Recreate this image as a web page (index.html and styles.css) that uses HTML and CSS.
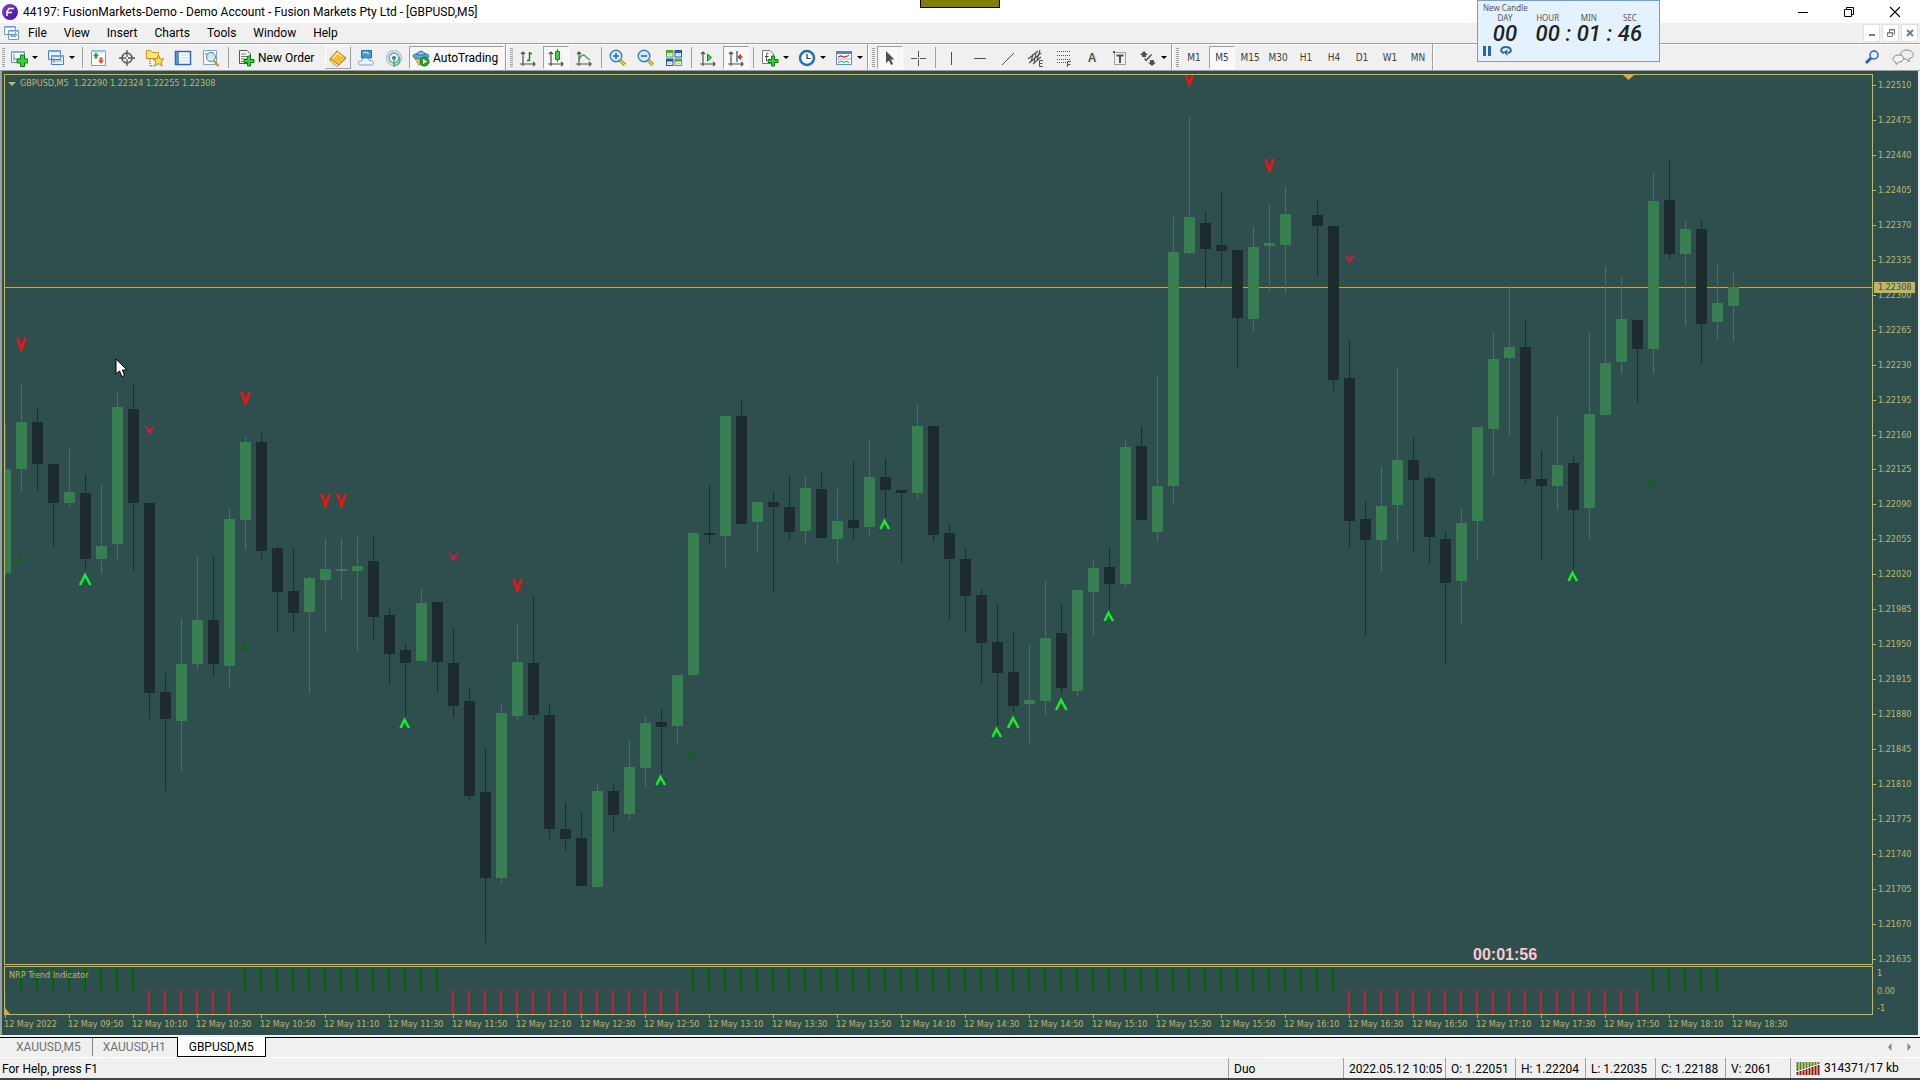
FILE: index.html
```html
<!DOCTYPE html>
<html lang="en">
<head>
    <meta charset="UTF-8">
    <title>44197: FusionMarkets-Demo</title>
    <link rel="stylesheet" href="styles.css">
</head>
<body>
<header class="titlebar">
    <svg class="app-icon" width="16" height="16" viewBox="0 0 16 16"><defs><linearGradient id="app" x1="0" y1="0" x2="1" y2="1"><stop offset="0" stop-color="#8a3fe0"/><stop offset="1" stop-color="#3c1390"/></linearGradient></defs><circle cx="8" cy="8" r="8" fill="url(#app)"/><path d="M5 12V7.500L7 4.500H12M5.500 8.500H10" fill="none" stroke="#fff" stroke-width="1.500"/></svg>
    <h1>44197: FusionMarkets-Demo - Demo Account - Fusion Markets Pty Ltd - [GBPUSD,M5]</h1>
    <div class="window-buttons">
        <button aria-label="Minimize"><svg width="12" height="12" viewBox="0 0 12 12"><path d="M1 6.500H11" stroke="#000"/></svg></button>
        <button aria-label="Restore"><svg width="12" height="12" viewBox="0 0 12 12"><path d="M1.500 3.500H8.500V10.500H1.500ZM3.500 3V1.500H10.500V8.500H9" fill="none" stroke="#000"/></svg></button>
        <button aria-label="Close"><svg width="12" height="12" viewBox="0 0 12 12"><path d="M1 1L11 11M11 1L1 11" stroke="#000" stroke-width="1.100"/></svg></button>
    </div>
</header>

<nav class="menubar">
    <svg class="menu-icon" width="16" height="16" viewBox="0 0 16 16"><path d="M.5 1.500H11.500V9.500H.5ZM4.500 5.500H14.500V14.500H4.500Z" fill="#fff" stroke="#6f9bd0"/><path d="M1 2.500H11M5 6.500H14" stroke="#9fc3ea"/><path d="M6 9L8 12L9.500 9L11 12L13 9" fill="none" stroke="#4c7cb8"/></svg>
    <button>File</button>
    <button>View</button>
    <button>Insert</button>
    <button>Charts</button>
    <button>Tools</button>
    <button>Window</button>
    <button>Help</button>
    <div class="mdi-buttons">
        <button aria-label="Minimize chart"><svg width="8" height="8" viewBox="0 0 8 8"><path d="M1 6H7" stroke="#6f7f8f" stroke-width="2"/></svg></button>
        <button aria-label="Restore chart"><svg width="8" height="8" viewBox="0 0 8 8"><path d="M.5 3.500H5.500V7.500H.5ZM2.500 3V.5H7.500V5H6" fill="none" stroke="#6f7f8f"/><path d="M0 4H6M2 1H8" stroke="#6f7f8f"/></svg></button>
        <button aria-label="Close chart"><svg width="8" height="8" viewBox="0 0 8 8"><path d="M1 1L7 7M7 1L1 7" stroke="#6f7f8f" stroke-width="2"/></svg></button>
    </div>
</nav>

<div class="toolbar">
    <div class="group first">
        <button class="tool drop" aria-label="New chart"><svg width="18" height="18" viewBox="0 0 18 18"><path d="M1.500 2.500H14.500V13.500H1.500Z" fill="#fff" stroke="#5d8fc4"/><path d="M1 3H15" stroke="#7fb0e0" stroke-width="2"/><path d="M4 5V12M3 10H13" stroke="#8895a5"/><path d="M10.500 6H14.500V10H18V14H14.500V17.500H10.500V14H7V10H10.500Z" fill="#35d435" stroke="#0a7a12"/></svg></button>
        <button class="tool drop" aria-label="Profiles"><svg width="18" height="18" viewBox="0 0 18 18"><path d="M1.500 1.500H13.500V10.500H1.500ZM4.500 6.500H16.500V15.500H4.500Z" fill="#eaf3fc" stroke="#4a80bd"/><path d="M1 2H14M4 7H17" stroke="#6ea5dc" stroke-width="2"/><path d="M4 12H15M7 9V14" stroke="#6f9bd0"/></svg></button>
        <i class="sep"></i>
        <button class="tool" aria-label="Market Watch"><svg width="18" height="18" viewBox="0 0 18 18"><path d="M1.500 1.500H15.500V16.500H1.500Z" fill="#fff" stroke="#6fa0d6"/><path d="M1 2.500H16" stroke="#a9cdf0" stroke-width="2"/><path d="M6 3.500L9 7H7.500V9.500H4.500V7H3Z" fill="#24a62c"/><path d="M11 15L14 11.500H12.500V8.500H9.500V11.500H8Z" fill="#ea5820"/></svg></button>
        <button class="tool" aria-label="Data Window"><svg width="18" height="18" viewBox="0 0 18 18"><circle cx="9" cy="9" r="5" fill="none" stroke="#555" stroke-width="1.500"/><path d="M9 1V8M9 10V17M1 9H8M10 9H17" stroke="#555" stroke-width="1.300"/></svg></button>
        <button class="tool" aria-label="Navigator"><svg width="20" height="18" viewBox="0 0 20 18"><path d="M1.500 10V1.500H6L7.500 3.500H13.500V9.500H1.500Z" fill="#ffe27a" stroke="#c99a2a"/><path d="M5 10V17H9" stroke="#555" fill="none" stroke-dasharray="1 1"/><path d="M13.500 6L15.200 10H19L16 12.700L17.200 17L13.500 14.600L9.800 17L11 12.700L8 10H11.800Z" fill="#ffdc55" stroke="#b98918"/></svg></button>
        <button class="tool" aria-label="Terminal"><svg width="18" height="18" viewBox="0 0 18 18"><path d="M1.500 2.500H16.500V15.500H1.500Z" fill="#fff" stroke="#2f69ad" stroke-width="1.500"/><path d="M2 3H5V15H2Z" fill="#5b92d3"/><path d="M7 6H15M7 9H15M7 12H15" stroke="#bdd4ec"/></svg></button>
        <button class="tool" aria-label="Strategy Tester"><svg width="18" height="18" viewBox="0 0 18 18"><path d="M1.500 1.500H14.500V15.500H1.500Z" fill="#fff" stroke="#7da5cc"/><path d="M3 5H6V9M10 3V9" stroke="#607890" fill="none"/><circle cx="9" cy="8" r="4.500" fill="#cde7f7cc" stroke="#4f83ae"/><path d="M12 12L16.500 17" stroke="#c9962d" stroke-width="2.500"/></svg></button>
        <i class="sep"></i>
        <button class="tool wide"><svg width="17" height="18" viewBox="0 0 17 18"><path d="M1.500 1.500H9L12.500 5V14.500H1.500Z" fill="#fff" stroke="#555"/><path d="M3 5H8M3 7.500H10M3 10H10M3 12.500H7" stroke="#777"/><path d="M9.500 7H12.500V10.500H16V13.500H12.500V17H9.500V13.500H6V10.500H9.500Z" fill="#35d435" stroke="#0a7a12"/></svg>New Order</button>
        <button class="tool raised" aria-label="MetaEditor"><svg width="18" height="18" viewBox="0 0 18 18"><path d="M1 10L8 2L17 9L10 16Z" fill="#f2bd3e" stroke="#b27a13"/><path d="M1 10V12L8 17.500L10 16Z" fill="#fff3bf" stroke="#a87318" stroke-width=".7"/><path d="M4 9L8.500 4L13 7.500" fill="none" stroke="#ffe99b" stroke-width="1.500"/></svg></button>
        <button class="tool" aria-label="Cloud"><svg width="18" height="18" viewBox="0 0 18 18"><path d="M4.500 1.500H14.500V9H4.500Z" fill="#3d9bdc" stroke="#1f70b5"/><path d="M6 4L9 3L12 5" stroke="#fff" fill="none"/><path d="M4 16C0 16 1 11 4.500 12C6 8 11 8 12 11.500C17 10.500 18 16 14 16Z" fill="#edf3fb" stroke="#7a9cc8"/></svg></button>
        <button class="tool" aria-label="Signals"><svg width="18" height="18" viewBox="0 0 18 18"><circle cx="9" cy="9" r="7.500" fill="none" stroke="#b1cbd9" stroke-width="1.400"/><circle cx="9" cy="9" r="5" fill="none" stroke="#6d9fb5" stroke-width="1.400"/><circle cx="9" cy="9" r="2" fill="#347aa0"/><path d="M9 9V17C14 16 16 12 14 8" stroke="#58b46c" stroke-width="1.600" fill="none"/></svg></button>
        <button class="tool wide pressed"><svg width="18" height="18" viewBox="0 0 18 18"><path d="M2 8H16L12 16H7Z" fill="#f4cf4b" stroke="#b98c1f"/><ellipse cx="9" cy="7" rx="8" ry="3" fill="#5aa9db" stroke="#2e78ae"/><path d="M5 6C5 1 13 1 13 6Z" fill="#7cc4ee" stroke="#2e78ae"/><circle cx="12.500" cy="12.500" r="4.500" fill="#21a72b" stroke="#11761b"/><path d="M11 10L15 12.500L11 15Z" fill="#fff"/></svg>AutoTrading</button>
    </div>
    <div class="group">
        <button class="tool" aria-label="Bar chart"><svg width="18" height="18" viewBox="0 0 18 18"><path d="M4 3V17M1 15H16M2 5L4 3L6 5M14 13L16 15L14 17" class="axes"/><path d="M10.500 3V12M8 11.500H10.500M10.500 4.500H13" stroke="#138a1d" stroke-width="1.500"/></svg></button>
        <button class="tool pressed" aria-label="Candlesticks"><svg width="18" height="18" viewBox="0 0 18 18"><path d="M4 3V17M1 15H16M2 5L4 3L6 5M14 13L16 15L14 17" class="axes"/><path d="M10.500 0V13" stroke="#138a1d"/><path d="M8.500 2.500H12.500V10.500H8.500Z" fill="#3bd43f" stroke="#138a1d"/></svg></button>
        <button class="tool" aria-label="Line chart"><svg width="18" height="18" viewBox="0 0 18 18"><path d="M4 3V17M1 15H16M2 5L4 3L6 5M14 13L16 15L14 17" class="axes"/><path d="M4 11C6 5 9 5 11 8L15 11" stroke="#3aa044" stroke-width="1.300" fill="none"/></svg></button>
        <i class="sep"></i>
        <button class="tool" aria-label="Zoom in"><svg width="18" height="18" viewBox="0 0 18 18"><path d="M11 11L16 16" stroke="#c79b20" stroke-width="3.500"/><path d="M11 11L16 16" stroke="#ffe680" stroke-width="1"/><circle cx="7" cy="7" r="5.800" fill="#d3ebfb" stroke="#3d7fb8" stroke-width="1.400"/><path d="M4 7H10M7 4V10" stroke="#2b6ca8" stroke-width="1.600"/></svg></button>
        <button class="tool" aria-label="Zoom out"><svg width="18" height="18" viewBox="0 0 18 18"><path d="M11 11L16 16" stroke="#c79b20" stroke-width="3.500"/><path d="M11 11L16 16" stroke="#ffe680" stroke-width="1"/><circle cx="7" cy="7" r="5.800" fill="#d3ebfb" stroke="#3d7fb8" stroke-width="1.400"/><path d="M4 7H10" stroke="#2b6ca8" stroke-width="1.600"/></svg></button>
        <button class="tool" aria-label="Tile windows"><svg width="18" height="18" viewBox="0 0 18 18"><path d="M1 1H8.500V8.500H1ZM9.500 9.500H17V17H9.500Z" fill="#56a832"/><path d="M9.500 1H17V8.500H9.500ZM1 9.500H8.500V17H1Z" fill="#2356b4"/><path d="M2 4H7.500V7.500H2ZM10.500 4H16V7.500H10.500ZM2 12.500H7.500V16H2ZM10.500 12.500H16V16H10.500Z" fill="#e4eefa"/><path d="M3 5.500H6M12 5.500H15M3 14.500H6M12 14.500H15" stroke="#9db"/></svg></button>
        <i class="sep"></i>
        <button class="tool" aria-label="Auto scroll"><svg width="18" height="18" viewBox="0 0 18 18"><path d="M4 3V17M1 15H16M2 5L4 3L6 5M14 13L16 15L14 17" class="axes"/><path d="M8.500 5L12.500 8.500L8.500 12Z" fill="#3bd43f" stroke="#138a1d"/></svg></button>
        <button class="tool pressed" aria-label="Chart shift"><svg width="18" height="18" viewBox="0 0 18 18"><path d="M4 3V17M1 15H16M2 5L4 3L6 5M14 13L16 15L14 17" class="axes"/><path d="M10 2V13" stroke="#2b6ca8" stroke-width="1.400"/><path d="M15.500 8H12M14 5.500L11.500 8L14 10.500" stroke="#b53a12" stroke-width="1.500" fill="none"/></svg></button>
        <i class="sep"></i>
        <button class="tool drop" aria-label="Indicators"><svg width="18" height="18" viewBox="0 0 18 18"><path d="M1.500 1.500H9L12.500 5V14.500H1.500Z" fill="#fff" stroke="#777"/><path d="M7.500 4C5.500 3.500 5.500 5 5.500 12M4 7.500H7.500" stroke="#444" fill="none"/><path d="M10.500 7H13.500V10.500H17V13.500H13.500V17H10.500V13.500H7V10.500H10.500Z" fill="#35d435" stroke="#0a7a12"/></svg></button>
        <button class="tool drop" aria-label="Periods"><svg width="18" height="18" viewBox="0 0 18 18"><circle cx="9" cy="9" r="7" fill="#f4f9ff" stroke="#2270bb" stroke-width="2.500"/><path d="M9 5V9.500H12.500" stroke="#333" fill="none" stroke-width="1.200"/></svg></button>
        <button class="tool drop" aria-label="Templates"><svg width="18" height="18" viewBox="0 0 18 18"><path d="M1.500 2.500H16.500V15.500H1.500Z" fill="#fff" stroke="#5d8fc4"/><path d="M1 3.500H17" stroke="#4c86c4" stroke-width="3"/><path d="M3 8L6 7L9 8L14 6.500" stroke="#a33" fill="none" stroke-width="1.200"/><path d="M2 10H16" stroke="#89b0d8"/><path d="M3 13.500L6 12L9 13.500L11 12L14 13.500" stroke="#2a9a34" fill="none"/></svg></button>
    </div>
    <div class="group">
        <button class="tool pressed" aria-label="Cursor"><svg width="18" height="18" viewBox="0 0 18 18"><path d="M5 2V14L8 11.500L10 16L12 15L10 10.500H13.500Z" fill="#505050"/></svg></button>
        <button class="tool" aria-label="Crosshair"><svg width="18" height="18" viewBox="0 0 18 18"><path d="M9.500 2V8M9.500 11V17M2 9.500H8M11 9.500H17M9 9.500H10" stroke="#505050"/></svg></button>
        <i class="sep"></i>
        <button class="tool" aria-label="Vertical line"><svg width="18" height="18" viewBox="0 0 18 18"><path d="M8.500 3V16" stroke="#505050"/></svg></button>
        <button class="tool" aria-label="Horizontal line"><svg width="18" height="18" viewBox="0 0 18 18"><path d="M3 9.500H15" stroke="#505050"/></svg></button>
        <button class="tool" aria-label="Trendline"><svg width="18" height="18" viewBox="0 0 18 18"><path d="M3 16L15 4" stroke="#505050"/></svg></button>
        <button class="tool" aria-label="Equidistant channel"><svg width="18" height="18" viewBox="0 0 18 18"><path d="M1 10L11 2M2 14L14 4M6 15L14 8M6 5L4 13M9 4L7 13M13 1L10 11" stroke="#505050" stroke-width="1.100"/><path d="M16 11.500H12.500V17.500H16M12.500 14.500H15.500" stroke="#505050" fill="none"/></svg></button>
        <button class="tool" aria-label="Fibonacci retracement"><svg width="18" height="18" viewBox="0 0 18 18"><path d="M2 2.500H16M2 6.500H16M2 10.500H16M2 13.500H11" stroke="#505050" stroke-dasharray="1 1"/><path d="M16 12.500H12.500V18M12.500 15.500H15.500" stroke="#505050" fill="none"/></svg></button>
        <button class="tool letter" aria-label="Text">A</button>
        <button class="tool" aria-label="Text label"><svg width="18" height="18" viewBox="0 0 18 18"><path d="M3.500 3.500H14.500V15.500H3.500Z" fill="none" stroke="#505050" stroke-dasharray="1 1"/><path d="M2 2H4V4H2Z" fill="#505050"/><path d="M5.500 6.500H12.500M9 6V14" stroke="#505050" stroke-width="2"/></svg></button>
        <button class="tool drop" aria-label="Arrows"><svg width="18" height="18" viewBox="0 0 18 18"><path d="M5 2L9 6H7V8H3V6H1ZM13 17L17 13.500L15 13.500V11H11V13.500H9Z" fill="#505050"/><path d="M5.500 9.500L8 12M8 10.500L12.500 5.500" stroke="#505050" stroke-width="1.500"/></svg></button>
    </div>
    <div class="group frames">
        <button class="tool">M1</button>
        <button class="tool pressed">M5</button>
        <button class="tool">M15</button>
        <button class="tool">M30</button>
        <button class="tool">H1</button>
        <button class="tool">H4</button>
        <button class="tool">D1</button>
        <button class="tool">W1</button>
        <button class="tool">MN</button>
    </div>
    <div class="group-end"></div>
    <div class="toolbar-right">
        <button aria-label="Search"><svg width="16" height="16" viewBox="0 0 16 16"><path d="M2 14L7 9" stroke="#2d5fb4" stroke-width="3"/><circle cx="10" cy="6" r="4" fill="#e8f2ff" stroke="#2d5fb4" stroke-width="1.500"/></svg></button>
        <button aria-label="Chat"><svg width="22" height="16" viewBox="0 0 22 16"><path d="M14 1C23 1 23 9 17 9.500L17 13L14 10C7 10 7 1 14 1Z" fill="#eee" stroke="#888"/><path d="M7 6C-1 6 0 13 4 13L4 15.500L7 13C13 13 13 6 7 6Z" fill="#f8f8f8" stroke="#888"/></svg></button>
    </div>
</div>

<main class="chart">
    <div class="plot">
        <svg id="candles" class="canvas"></svg>
        <p class="quote">GBPUSD,M5&nbsp; 1.22290 1.22324 1.22255 1.22308</p>
    </div>
    <div class="prices" id="prices"><span class="current">1.22308</span></div>
    <div class="plot sub">
        <svg id="trend" class="canvas"></svg>
        <p class="sub-name">NRP Trend Indicator</p>
    </div>
    <div class="levels"><span>1</span><span>0.00</span><span>-1</span></div>
    <div class="times" id="times"></div>
</main>

<div class="tabs">
    <button>XAUUSD,M5</button>
    <button>XAUUSD,H1</button>
    <button class="active">GBPUSD,M5</button>
    <div class="tab-arrows">
        <button aria-label="Previous tab"><svg width="6" height="8" viewBox="0 0 6 8"><path d="M4.500 0V8L1 4Z" fill="#888"/></svg></button>
        <button aria-label="Next tab"><svg width="6" height="8" viewBox="0 0 6 8"><path d="M1.500 0V8L5 4Z" fill="#888"/></svg></button>
    </div>
</div>

<footer class="status">
    <span class="help">For Help, press F1</span>
    <span class="profile">Duo</span>
    <span class="date">2022.05.12 10:05</span>
    <span>O: 1.22051</span>
    <span>H: 1.22204</span>
    <span>L: 1.22035</span>
    <span>C: 1.22188</span>
    <span class="volume">V: 2061</span>
    <span class="traffic"><svg width="24" height="13" viewBox="0 0 24 13"><path d="M1.500 0V9M4.500 0V8M7.500 0V7M10.500 0V6M13.500 0V5M16.500 0V4M19.500 0V3M22.500 0V2" stroke="#5b7f1c" stroke-width="2"/><path d="M1.500 10V13M4.500 9V13M7.500 8V13M10.500 7V13M13.500 6V13M16.500 5V13M19.500 4V13M22.500 3V13" stroke="#8f1a10" stroke-width="2"/></svg>314371/17 kb</span>
</footer>

<div class="share-tab"></div>

<section class="timer">
    <h2>New Candle</h2>
    <dl>
        <div><dt>DAY</dt><dd>00</dd></div>
        <div><dt>HOUR</dt><dd>00</dd></div>
        <b>:</b>
        <div><dt>MIN</dt><dd>01</dd></div>
        <b>:</b>
        <div><dt>SEC</dt><dd>46</dd></div>
    </dl>
    <div class="timer-buttons">
        <button aria-label="Pause"><svg width="8" height="10" viewBox="0 0 8 10"><path d="M0 0H3V10H0ZM5 0H8V10H5Z" fill="#2d66a8"/></svg></button>
        <button aria-label="Reset"><svg width="12" height="10" viewBox="0 0 12 10"><path d="M4 7C-1 6 1 1 6 1S13 6 8 7" fill="none" stroke="#2d66a8" stroke-width="1.800"/><path d="M3.500 6L7.500 3.500V10Z" fill="#2d66a8"/></svg></button>
    </div>
</section>

<svg class="pointer" width="13" height="20" viewBox="0 0 13 20"><path d="M1 1V16L4.500 13L7 18.500L9.500 17.500L7.500 12H12Z" fill="#fff" stroke="#000"/></svg>

<script src="script.js"></script>
</body>
</html>
```

FILE: styles.css
```css
*{
    box-sizing: border-box;
}

body{
    margin:0;
    height:100vh;
    display: flex;
    flex-direction: column;
    overflow: hidden;
    background:#f0f0f0;
    border-bottom: 2px solid #444;
    font-family: Roboto, "Open Sans", sans-serif;
    font-size:12px;
    line-height: 16px;
    color:#000;
}

h1, h2, p, dl, dd{
    margin:0;
    font-size: inherit;
    font-weight: normal;
}

button{
    border:0;
    padding:0;
    background: none;
    font: inherit;
    color: inherit;
}

svg{
    display: block;
    flex: none;
}

/* title and menu */
.titlebar{
    flex: none;
    display: flex;
    align-items: center;
    height:23px;
    padding: 0 2px;
    background:#fff;
}

.titlebar h1{
    margin-left:5px;
    white-space: nowrap;
}

.window-buttons{
    display: flex;
    margin-left:auto;
}

.window-buttons button{
    display: grid;
    place-items: center;
    width:46px;
    height:22px;
}

.menubar{
    flex: none;
    display: flex;
    align-items: center;
    height:20px;
    padding: 0 2px 0 4px;
}

.menu-icon{
    margin-right:8px;
}

.menubar > button{
    margin-right:17px;
}

.mdi-buttons{
    display: flex;
    gap:2px;
    margin-left:auto;
}

.mdi-buttons button{
    display: grid;
    place-items: center;
    width:17px;
    height:18px;
    background:#fff;
    border:1px solid #e0e0e0;
}

/* toolbar */
.toolbar{
    flex: none;
    display: flex;
    height:28px;
    border-top:1px solid #a0a0a0;
    border-bottom:1px solid #a0a0a0;
    box-shadow: inset 0 1px #fff;
}

.group{
    display: flex;
    align-items: center;
    padding: 1px 0 0 8px;
    border-left:1px solid #a0a0a0;
    background: repeating-linear-gradient(#a0a0a0 0 1px, transparent 1px 2px) 4px 4px / 3px 19px no-repeat;
    box-shadow: inset 1px 0 #fff;
}

.group.first{
    padding-left:5px;
    border-left:0;
    background-position: 2px 4px;
    box-shadow: none;
}

.group-end{
    width:2px;
    border-left:1px solid #a0a0a0;
    background:#fff;
}

.sep{
    width:1px;
    height:21px;
    margin: 0 2px 0 3px;
    background:#a0a0a0;
}

.tool{
    display: flex;
    align-items: center;
    justify-content: center;
    width:26px;
    height:23px;
    margin: 0 1px;
    border:1px solid transparent;
}

.tool.drop{
    width:35px;
    justify-content: flex-start;
    padding-left:3px;
}

.tool.drop::after{
    content:"";
    margin-left:4px;
    border: 3px solid transparent;
    border-top-color:#000;
    border-bottom:0;
}

.tool.wide{
    width:91px;
    justify-content: flex-start;
    gap:3px;
    padding-left:5px;
    white-space: nowrap;
}

.tool.wide.pressed{
    width:95px;
    padding-left:2px;
}

.tool.pressed{
    background:#f8f8f8;
    border-color:#a0a0a0 #fff #fff #a0a0a0;
}

.tool.raised{
    border-color:#fff #a0a0a0 #a0a0a0 #fff;
}

.tool.letter{
    font: bold 12px/16px "Liberation Sans", sans-serif;
    color:#505050;
}

.frames .tool{
    font: 10px/14px "DejaVu Sans Condensed", sans-serif;
    color:#404040;
}

.axes{
    fill:none;
    stroke:#505050;
    stroke-width:1.2;
}

.toolbar-right{
    display: flex;
    align-items: center;
    gap:12px;
    margin-left:auto;
    padding-right:6px;
}

/* chart window */
.chart{
    flex:1;
    min-height:0;
    display: grid;
    grid-template-columns: 1fr 45px;
    grid-template-rows: 1fr 49px 19px;
    row-gap:1px;
    margin-right:2px;
    padding: 3px 0 0 2px;
    border-left:2px solid #a0a0a0;
    background:#2f4f4f;
    color:#bdb76b;
    font: 9px/11px "DejaVu Sans Condensed", sans-serif;
}

.plot{
    position: relative;
    min-width:0;
    min-height:0;
    border:1px solid #bdb76b;
}

.canvas{
    width:100%;
    height:100%;
    overflow: hidden;
}

.quote{
    position: absolute;
    left:3px;
    top:3px;
    display: flex;
    align-items: center;
    gap:4px;
    white-space: pre;
}

.quote::before{
    content:"";
    border:4px solid transparent;
    border-top-color:#bdb76b;
    border-bottom:0;
}

.sub-name{
    position: absolute;
    left:4px;
    top:3px;
}

.prices{
    position: relative;
    display: flex;
    flex-direction: column;
    justify-content: space-between;
    padding-top:6px;
}

.prices span{
    padding-left:5px;
}

.prices span:not(.current)::before{
    content:"";
    position: absolute;
    left:0;
    width:3px;
    height:1px;
    margin-top:5px;
    background:#bdb76b;
}

.prices .current{
    position: absolute;
    left:1px;
    top:208px;
    width:41px;
    padding-left:4px;
    background:#bdb76b;
    color:#2f4f4f;
}

.levels{
    display: flex;
    flex-direction: column;
    justify-content: space-between;
    padding: 2px 0 1px 4px;
}

.times{
    grid-column: 1 / 3;
    display: flex;
    overflow: hidden;
    margin-top:-1px;
}

.times span{
    flex: none;
    width:64px;
    padding-top:4px;
    white-space: nowrap;
    background: linear-gradient(#bdb76b, #bdb76b) 1px 0 / 1px 3px no-repeat;
}

/* drawing colours */
.up{
    fill:#377e52;
}

.down{
    fill:#1c2c2c;
}

.price-line{
    fill:#daa520;
}

.price-line-edge{
    fill:#5a4a12;
}

.shift{
    fill:#f0a818;
}

.sell{
    fill:none;
    stroke:#f01414;
    stroke-width:2.5;
}

.buy{
    fill:none;
    stroke:#14f028;
    stroke-width:2.5;
}

.turn-down{
    fill:#c8203c;
}

.turn-up{
    fill:#0c6414;
}

.countdown{
    fill:#ffc8d0;
    font: bold 16px "Liberation Sans", sans-serif;
}

.trend-up{
    fill:#006400;
}

.trend-down{
    fill:#c81e3c;
}

/* tabs and status bar */
.tabs{
    flex: none;
    display: flex;
    height:21px;
    margin-top:2px;
    padding-left:5px;
    border-top:1px solid #000;
    border-bottom:1px solid #fff;
    color:#707070;
}

.tabs > button{
    height:18px;
    padding: 0 11px;
}

.tabs > button:first-child{
    box-shadow: 1px 0 #808080;
}

.tabs .active{
    margin-top:-1px;
    height:20px;
    background:#fff;
    border:1px solid #000;
    border-top:0;
    color:#000;
}

.tab-arrows{
    display: flex;
    align-items: center;
    gap:13px;
    margin-left:auto;
    padding: 0 8px 2px 0;
}

.status{
    flex: none;
    display: flex;
    height:20px;
    line-height: 22px;
    white-space: nowrap;
}

.status span{
    flex: none;
    width:70px;
    padding-left:5px;
    border-left:1px solid #a0a0a0;
}

.status .help{
    flex:1;
    padding-left:2px;
    border:0;
}

.status .profile{
    width:115px;
}

.status .date{
    width:102px;
}

.status .volume{
    width:65px;
}

.status .traffic{
    display: flex;
    align-items: center;
    gap:4px;
    width:130px;
}

/* floating things */
.share-tab{
    position: absolute;
    left:50%;
    top:0;
    width:80px;
    height:8px;
    margin-left:-40px;
    background:#808000;
    border:1px solid #000;
    border-top:0;
}

.timer{
    position: absolute;
    right:260px;
    top:0;
    width:183px;
    height:62px;
    padding: 2px 5px;
    background:#e3f2fe;
    border:1px solid #7a9cc8;
    color:#555;
    font: 8px/10px "Noto Sans", sans-serif;
}

.timer dl{
    display: flex;
    justify-content: space-between;
    padding: 0 11px 0 9px;
}

.timer dl div{
    width:26px;
    text-align: center;
}

.timer dd, .timer b{
    color:#222;
    font: italic 500 22px/21px Roboto, sans-serif;
}

.timer b{
    align-self: flex-end;
}

.timer dl div:nth-child(2){
    margin-left:12px;
}

.timer-buttons{
    display: flex;
    gap:9px;
    margin-top:2px;
}

.pointer{
    position: absolute;
    left:115px;
    top:358px;
}
```

FILE: script.js
```js
// one entry per 5 minute bar: high, body top, body bottom, low, direction
var bars = [
    [425,469,573,576,1],[383,422,469,492,1],[407,422,464,490,0],[463,464,503,546,0],
    [449,492,503,506,1],[474,493,559,569,0],[486,546,559,574,1],[391,407,544,560,1],
    [384,409,503,570,0],[503,503,693,719,0],[673,692,719,791,0],[619,664,721,770,1],
    [557,620,664,669,1],[557,620,664,677,0],[508,519,666,687,1],[438,442,520,550,1],
    [433,442,551,559,0],[546,548,592,632,0],[549,591,613,632,0],[575,578,612,693,1],
    [539,569,580,631,1],[539,569,571,601,1],[537,566,571,650,1],[535,561,617,641,0],
    [608,615,654,685,0],[643,650,663,716,0],[590,603,661,661,1],[602,602,662,693,0],
    [629,663,706,718,0],[688,701,796,800,0],[748,792,878,943,0],[704,713,878,883,1],
    [624,662,716,720,1],[597,663,715,720,0],[704,715,829,839,0],[802,829,839,850,0],
    [813,838,886,886,0],[783,791,887,888,1],[784,791,815,832,0],[740,767,814,819,1],
    [716,723,768,786,1],[710,722,727,773,0],[675,675,726,744,1],[533,533,675,675,1],
    [486,533,535,545,0],[416,416,536,567,1],[399,416,524,524,0],[501,502,522,553,1],
    [491,502,507,592,0],[475,507,532,540,0],[476,488,531,545,1],[472,489,538,538,0],
    [489,521,539,562,1],[462,520,528,539,0],[439,477,527,536,1],[458,477,490,517,0],
    [490,490,493,562,0],[404,426,493,498,1],[426,426,535,542,0],[525,533,559,619,0],
    [549,559,596,633,0],[590,595,643,683,0],[604,642,673,725,0],[632,672,706,712,0],
    [646,700,704,743,1],[582,638,701,714,1],[604,633,688,694,0],[589,590,691,696,1],
    [559,568,592,636,1],[547,567,584,609,0],[440,447,584,588,1],[426,446,520,520,0],
    [375,486,532,541,1],[217,252,486,504,1],[118,217,253,255,1],[211,223,249,288,0],
    [191,245,251,282,0],[250,250,318,368,0],[227,247,319,332,1],[204,243,246,291,1],
    [187,214,245,293,1],null,[200,215,226,277,0],[226,226,380,391,0],
    [340,378,521,547,0],[502,519,540,635,0],[467,506,540,572,1],[367,460,505,541,1],
    [438,460,480,553,0],[475,478,537,564,0],[531,539,583,664,0],[508,523,581,625,1],
    [427,427,521,561,1],[332,359,429,476,1],[286,347,358,435,1],[320,347,479,484,0],
    [450,479,486,560,0],[416,465,486,510,1],[456,463,510,569,0],[332,414,508,538,1],
    [266,363,415,417,1],[278,319,362,374,1],[320,320,349,402,0],[174,201,349,374,1],
    [159,200,254,258,0],[222,229,254,326,1],[220,229,324,363,0],[265,303,322,340,1],
    [271,287,306,341,1]
];

// signal marks: bar number, top
var sells = [[1,338],[15,392],[20,494],[21,494],[32,579],[74,73],[79,159]];
var buys = [[25,719],[41,776],[55,520],[62,728],[69,612],[98,572]];
var bigBuys = [[5,574],[63,717],[66,699]];
var turnsDown = [[9,425],[28,552],[84,254]];
var turnsUp = [[1,554],[15,643],[43,749],[103,477]];

var STEP = 16;
var out = '';

function rect(x, y, w, h, cls){
    return '<rect class="' + cls + '" x="' + x + '" y="' + y + '" width="' + w + '" height="' + h + '"/>';
}

function marks(list, cls, path){
    list.forEach(function(m){
        out += '<path class="' + cls + '" transform="translate(' + (m[0] * STEP) + ' ' + m[1] + ')" d="' + path + '"/>';
    });
}

out += rect(5, 286, '100%', 1, 'price-line-edge') + rect(5, 287, '100%', 1, 'price-line');

bars.forEach(function(b, i){
    if(!b){ return; }
    var cls = b[4] ? 'up' : 'down';
    out += rect(i * STEP + 5, b[0], 1, b[3] - b[0], cls);
    out += rect(i * STEP, b[1], 11, b[2] - b[1], cls);
});

marks(sells, 'sell', 'M1.500 0L5.500 11.500L9.500 0');
marks(buys, 'buy', 'M.5 9L4.500 1L9 9');
marks(bigBuys, 'buy', 'M0 11L5 1L10.500 11');
marks(turnsDown, 'turn-down', 'M0 0L5.500 4L11 0L5.500 10Z');
marks(turnsUp, 'turn-up', 'M0 9.500L4.500 0L6 5L10 9L4.500 6Z');
out += '<path class="shift" d="M1623 75H1634L1628.500 80Z"/>';
out += '<text class="countdown" x="1473" y="960">00:01:56</text>';
document.getElementById('candles').innerHTML = '<g transform="translate(-5 -75)">' + out + '</g>';

// trend histogram: first bar, last bar, direction
var runs = [[0,0,0],[1,8,1],[9,14,0],[15,27,1],[28,42,0],[43,83,1],[84,102,0],[103,107,1]];
var trend = '';
runs.forEach(function(r){
    for(var i = r[0]; i <= r[1]; i++){
        trend += rect(i * STEP - 1, r[2] ? 0 : 23, 2, r[2] ? 23 : 24, r[2] ? 'trend-up' : 'trend-down');
    }
});
trend += '<path class="shift" d="M0 41L5 47H0Z"/>';
document.getElementById('trend').innerHTML = trend;

// price scale
var prices = '';
for(var p = 122510; p >= 121635; p -= 35){
    prices += '<span>' + (p / 100000).toFixed(5) + '</span>';
}
document.getElementById('prices').insertAdjacentHTML('afterbegin', prices);

// time scale
var times = '<span>12 May 2022</span>';
for(var t = 590; t <= 1110; t += 20){
    times += '<span>12 May ' + ('0' + Math.floor(t / 60)).slice(-2) + ':' + ('0' + t % 60).slice(-2) + '</span>';
}
document.getElementById('times').innerHTML = times;
```
